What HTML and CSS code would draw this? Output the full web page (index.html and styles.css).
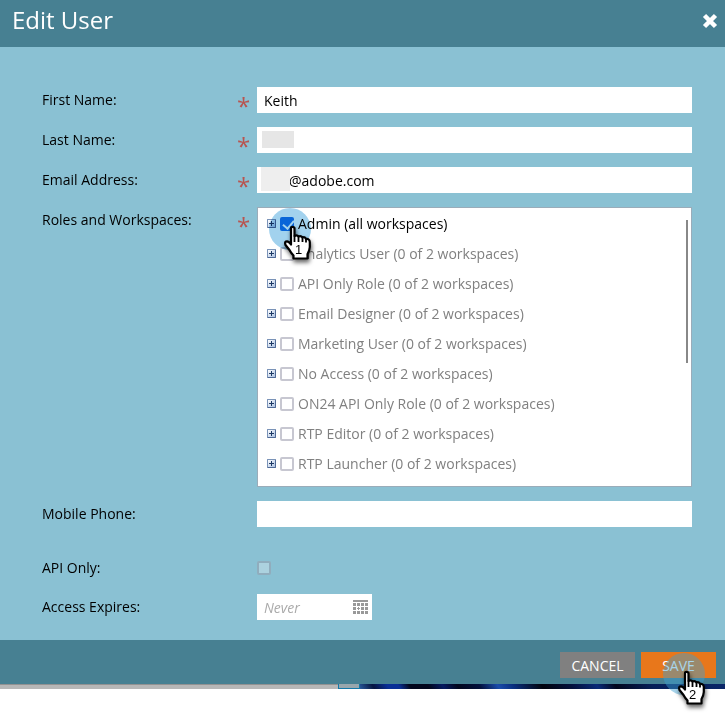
FILE: index.html
```html
<!DOCTYPE html>
<html lang="en">
<head>
  <meta charset="UTF-8" />
  <meta name="viewport" content="width=device-width, initial-scale=1.0"/>
  <title>Edit User</title>
  <link rel="stylesheet" href="styles.css">
</head>
<body>

  <svg class="defs" aria-hidden="true">
    <defs>
      <symbol id="hand" viewBox="0 0 30 38">
        <path d="M8 3Q8 1.800 9.500 1.800T11.500 3V11Q14 9.500 15.500 11.500Q18 10.500 19.500 12.500Q22 11.500 23 14Q26.500 13.500 26.800 17V22Q26.500 26 24.500 29V33.500H10.500V30.500Q8 28 6.500 25L2.500 20Q1.500 17.500 3 16.500Q5.500 15.500 8 19.500Z" fill="#fff" stroke="#000" stroke-width="2.200" stroke-linejoin="round"/>
        <path d="M11.500 10.500V17M15.500 11.500V17M19.500 12.500V17M23 14V17.500" fill="none" stroke="#000" stroke-width="1.800"/>
      </symbol>
    </defs>
  </svg>

  <form class="dialog">
    <header class="title-bar">
      <h1>Edit User</h1>
      <button type="button" class="close" aria-label="Close">
        <svg width="16" height="16" viewBox="0 0 16 16"><path d="M2.500 2.500L13.500 13.500M13.500 2.500L2.500 13.500" stroke="#fff" stroke-width="4.500"/></svg>
      </button>
    </header>

    <div class="fields">
      <div class="row">
        <label for="firstName">First Name:</label>
        <span class="required">*</span>
        <input type="text" id="firstName" value="Keith" />
      </div>
      <div class="row">
        <label for="lastName">Last Name:</label>
        <span class="required">*</span>
        <div class="masked">
          <input type="text" id="lastName" />
          <span class="mask mask-name"></span>
        </div>
      </div>
      <div class="row">
        <label for="email">Email Address:</label>
        <span class="required">*</span>
        <div class="masked">
          <input type="text" id="email" class="email" value="@adobe.com" />
          <span class="mask mask-email"></span>
        </div>
      </div>
      <div class="row roles-row">
        <span class="label" id="rolesLabel">Roles and Workspaces:</span>
        <span class="required">*</span>
        <div class="roles" role="group" aria-labelledby="rolesLabel">
          <ul id="roleList"></ul>
          <span class="scroll-thumb"></span>
          <div class="pointer pointer-one">
            <svg class="hand"><use href="#hand"/></svg>
            <span class="step">1</span>
          </div>
        </div>
      </div>
      <div class="row phone-row">
        <label for="phone">Mobile Phone:</label>
        <input type="text" id="phone" class="field" />
      </div>
      <div class="row api-row">
        <label for="apiOnly">API Only:</label>
        <input type="checkbox" id="apiOnly" class="field" disabled />
      </div>
      <div class="row">
        <label for="expires">Access Expires:</label>
        <div class="date field">
          <input type="text" id="expires" placeholder="Never" />
          <button type="button" class="calendar" aria-label="Pick a date">
            <svg width="15" height="14" viewBox="0 0 15 14" fill="#999">
              <path d="M0 0h15v2H0zM0 3h3v3H0zM4 3h3v3H4zM8 3h3v3H8zM12 3h3v3h-3zM0 7h3v3H0zM5 7h1v1h1v1H6v1H5V9H4V8h1zM8 7h3v3H8zM12 7h3v3h-3zM0 11h3v3H0zM4 11h3v3H4zM8 11h3v3H8zM12 11h3v3h-3z"/>
            </svg>
          </button>
        </div>
      </div>
    </div>

    <footer class="actions">
      <button type="button" class="cancel">CANCEL</button>
      <button type="submit" class="save">SAVE</button>
      <div class="pointer pointer-two">
        <svg class="hand"><use href="#hand"/></svg>
        <span class="step">2</span>
      </div>
    </footer>
  </form>

  <div class="backdrop">
    <span class="backdrop-grey"></span>
    <span class="backdrop-box"></span>
    <span class="backdrop-blue"></span>
  </div>

  <script>
    const roles = [
      { name: "Admin (all workspaces)", checked: true },
      { name: "Analytics User (0 of 2 workspaces)" },
      { name: "API Only Role (0 of 2 workspaces)" },
      { name: "Email Designer (0 of 2 workspaces)" },
      { name: "Marketing User (0 of 2 workspaces)" },
      { name: "No Access (0 of 2 workspaces)" },
      { name: "ON24 API Only Role (0 of 2 workspaces)" },
      { name: "RTP Editor (0 of 2 workspaces)" },
      { name: "RTP Launcher (0 of 2 workspaces)" }
    ];

    const list = document.getElementById('roleList');
    roles.forEach((role, i) => {
      const item = document.createElement('li');
      item.innerHTML = `
        <button type="button" class="expand" aria-label="Expand"></button>
        <input type="checkbox" id="role${i}" ${role.checked ? 'checked' : ''} />
        <label for="role${i}">${role.name}</label>`;
      list.appendChild(item);
    });
  </script>

</body>
</html>
```
FILE: styles.css
```css
* {
  box-sizing: border-box;
}

body {
  min-height: 100vh;
  margin: 0;
  background: #fff;
  color: #000;
  font: 14px/20px "Open Sans", sans-serif;
}

input, button {
  margin: 0;
  padding: 0;
  border: none;
  border-radius: 0;
  font: inherit;
}

.defs {
  position: absolute;
  width: 0;
  height: 0;
}

.dialog {
  background: #8ac1d3;
}

.title-bar {
  display: flex;
  align-items: flex-start;
  justify-content: space-between;
  padding: 4px 7px 11px 12px;
  background: #478092;
}

h1 {
  margin: 0;
  color: #fff;
  font-size: 24px;
  font-weight: 400;
  line-height: 32px;
}

.close {
  display: flex;
  margin-top: 9px;
  background: none;
}

.fields {
  display: flex;
  flex-direction: column;
  gap: 14px;
  padding: 40px 33px 20px 42px;
}

.row {
  display: grid;
  grid-template-columns: 195px 20px 1fr;
  align-items: center;
}

.field {
  grid-column: 3;
}

.required {
  height: 26px;
  color: #b85450;
  font-size: 24px;
  line-height: 38px;
}

input[type="text"] {
  display: block;
  width: 100%;
  height: 26px;
  padding: 0 7px;
  background: #fff;
  color: #000;
}

.masked {
  position: relative;
}

.masked .email {
  padding-left: 32px;
}

.mask {
  position: absolute;
}

.mask-name {
  top: 4px;
  left: 5px;
  width: 32px;
  height: 17px;
  background: #e6e6e6;
}

.mask-email {
  top: 0;
  left: 4px;
  width: 29px;
  height: 24px;
  background: #eee;
}

.roles-row {
  align-items: start;
}

.roles-row .label {
  padding-top: 3px;
}

.roles {
  position: relative;
  padding: 1px 9px 7px;
  border: 1px solid #9aacb9;
  background: #fff;
}

.roles ul {
  margin: 0;
  padding: 0;
  list-style: none;
}

.roles li {
  display: flex;
  align-items: center;
  height: 30px;
  color: #808080;
}

.roles li:first-child {
  color: #000;
}

.expand {
  width: 9px;
  height: 9px;
  margin: 0 4px 2px 0;
  border: 1px solid #7a93b8;
  border-right-color: #4f6a96;
  border-bottom-color: #4f6a96;
  border-radius: 1px;
  background:
    linear-gradient(#1d3a66, #1d3a66) center / 5px 1px no-repeat,
    linear-gradient(#1d3a66, #1d3a66) center / 1px 5px no-repeat,
    linear-gradient(135deg, #fff, #a9bfe0);
}

input[type="checkbox"] {
  appearance: none;
  width: 14px;
  height: 14px;
  border: 2px solid #c7c7d1;
  border-radius: 2px;
  background: #fff;
}

.roles input {
  margin: 0 4px 1px 0;
}

.roles input:checked {
  border: none;
  background: #0d7ae8;
}

.roles input:checked::after {
  content: "";
  display: block;
  width: 5px;
  height: 9px;
  margin: 1px 0 0 5px;
  border: solid #fff;
  border-width: 0 2px 2px 0;
  transform: rotate(40deg);
}

.scroll-thumb {
  position: absolute;
  top: 12px;
  right: 3px;
  width: 2px;
  height: 143px;
  background: #888;
}

.api-row {
  padding: 17px 0 2px;
}

#apiOnly {
  border-color: #90adbd;
  background: #acd2df;
}

.date {
  display: flex;
  align-items: center;
  width: 115px;
  padding-right: 4px;
  background: #fff;
}

.date input::placeholder {
  color: #aaa;
  font-style: italic;
}

.calendar {
  display: flex;
  background: none;
}

.actions {
  position: relative;
  display: flex;
  justify-content: flex-end;
  gap: 6px;
  padding: 12px 9px 6px;
  background: #478092;
}

.cancel, .save {
  width: 75px;
  height: 26px;
  padding-top: 2px;
  background: #808080;
  color: #fff;
}

.save {
  background: #e8771b;
}

/* numbered click markers */
.pointer {
  position: absolute;
  width: 42px;
  height: 42px;
}

.pointer::before {
  content: "";
  position: absolute;
  inset: 0;
  border-radius: 50%;
  background: rgba(60, 160, 210, 0.45);
}

.pointer-one {
  top: 0;
  left: 11px;
}

.pointer-one::before {
  background: #a2d2ee;
  mix-blend-mode: multiply;
}

.pointer-two {
  top: 13px;
  right: 20px;
}

.hand {
  position: absolute;
  top: 17px;
  left: 14px;
  width: 30px;
  height: 38px;
  overflow: visible;
  filter: drop-shadow(1px 3px 2px rgba(0, 0, 0, 0.6));
}

.step {
  position: absolute;
  top: 35px;
  left: 26px;
  font: 13px/14px "Liberation Sans", sans-serif;
}

.backdrop {
  display: flex;
  height: 5px;
}

.backdrop-grey {
  flex: 338;
  border-top: 1px solid #929292;
  background: #b7b7b7;
}

.backdrop-box {
  width: 22px;
  border: solid #1478a8;
  border-width: 0 1px 1px;
  background: #98a7ad;
}

.backdrop-blue {
  flex: 365;
  background: linear-gradient(60deg, #2a5a9c 0%, #071540 4%, #0a2f96 8%, #0a2f96 11%, #02061c 14%, #02061c 19%, #061a60 23%, #02061c 27%, #03103c 33%, #1a4caa 38%, #0a2f80 42%, #02030c 50%, #04103c 58%, #0a2a78 65%, #02061c 70%, #071f58 80%, #0a2668 100%);
}
```
